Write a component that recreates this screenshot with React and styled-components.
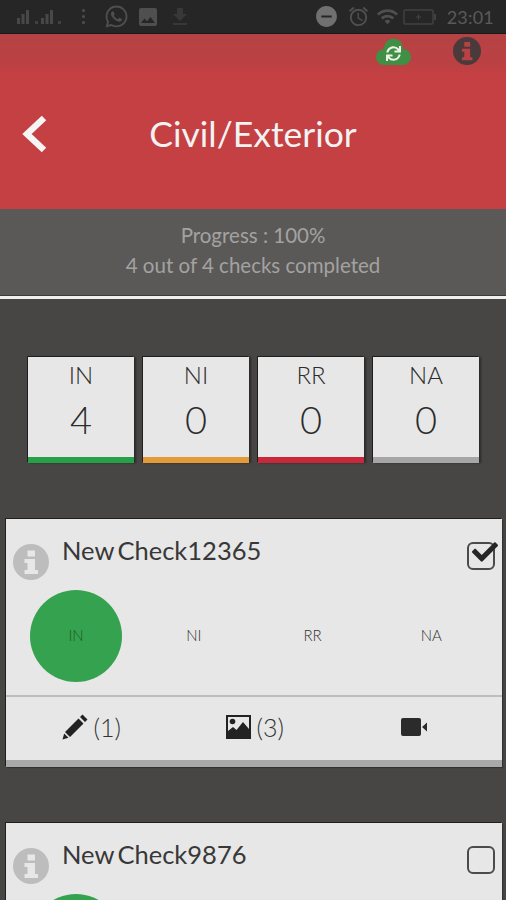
import React from "react";
import styled, { createGlobalStyle } from "styled-components";
import { FaWhatsapp, FaSync, FaCheck } from "react-icons/fa";
import { MdImage, MdFileDownload, MdDoNotDisturbOn, MdAccessAlarm, MdWifi } from "react-icons/md";

const Global = createGlobalStyle`
  html, body { margin: 0; padding: 0; background: #474645; overflow: hidden; }
  * { box-sizing: border-box; }
  body { font-family: Lato, "Open Sans", "Liberation Sans", sans-serif; }
`;

const Screen = styled.div`
  width: 506px; height: 900px; overflow: hidden; background: #474645; opacity: .999;
`;

const StatusBar = styled.div`
  height: 34px; background: #262626; display: flex; align-items: center;
  padding: 0 12px 0 16px; color: #4f4f4f; border-bottom: 1px solid #1a1a1a;
`;
const StatusLeft = styled.div`display: flex; align-items: center; flex: 1;`;
const StatusRight = styled.div`display: flex; align-items: center;`;
const Clock = styled.span`font-size: 18px; color: #5a5a5a; margin-left: 10px; letter-spacing: .2px;`;
const Dots = styled.div`
  display: flex; flex-direction: column; gap: 3px; margin: 0 19px 0 18px;
  & > i { width: 3px; height: 3px; border-radius: 50%; background: #4f4f4f; display: block; }
`;

const Signal = ({ n }) => (
  <svg width="24" height="18" viewBox="0 0 24 18">
    <g fill="#484848">
      <rect x="1" y="10" width="3" height="6" />
      <rect x="5.5" y="6" width="3" height="10" />
      <rect x="10" y="2" width="3" height="14" />
    </g>
    <rect x={n === 1 ? 19 : 18} y="13" width="3" height="3" fill="#404040" />
  </svg>
);

const Battery = () => (
  <svg width="34" height="18" viewBox="0 0 34 18" style={{ marginLeft: 4 }}>
    <rect x="1" y="2" width="29" height="14" rx="1" fill="none" stroke="#424242" strokeWidth="1.4" />
    <rect x="31" y="6" width="2" height="6" fill="#424242" />
    <path d="M13 9h5M15.5 6.5v5" stroke="#424242" strokeWidth="1.2" />
  </svg>
);

const InfoGlyph = ({ size, color }) => (
  <svg width={size} height={size} viewBox="0 0 36 36">
    <path
      fill={color}
      fillRule="evenodd"
      d="M18 0a18 18 0 1 1 0 36a18 18 0 0 1 0-36zM14.5 6.5v6h7.5v-6zM11.5 15v4h3v7h-3v4h13.500v-4h-3v-11z"
    />
  </svg>
);

const CloudGlyph = () => (
  <svg width="35" height="28" viewBox="0 0 35 28" fill="#3f8f44">
    <circle cx="17.500" cy="10" r="9.500" />
    <circle cx="8" cy="19" r="8" />
    <circle cx="27" cy="19" r="8" />
    <rect x="8" y="14" width="19" height="13" />
  </svg>
);

const PencilGlyph = () => (
  <svg width="26" height="26" viewBox="0 0 26 26" fill="#222">
    <path d="M19.500 1.500l1-1 5 5-1 1-1.500 1.500-5-5zM16.500 4.500l5 5L8 23 3 18z" />
    <path d="M2.200 19.500l4.300 4.300L0.500 25.500z" />
  </svg>
);

const PictureGlyph = () => (
  <svg width="25" height="24" viewBox="0 0 25 24">
    <path fill="#222" fillRule="evenodd" d="M0 0h25v24H0zM2 2v20h21V2z" />
    <circle cx="6.500" cy="6.500" r="2.800" fill="#222" />
    <path fill="#222" d="M2 22v-6l5-4 3.500 3L17 7l6 7v8z" />
  </svg>
);

const VideoGlyph = () => (
  <svg width="27" height="20" viewBox="0 0 27 20" fill="#2b2b2b">
    <rect x="0" y="1" width="20" height="18" rx="2" />
    <path d="M21 10l5-4.500v9z" />
  </svg>
);

const BackGlyph = () => (
  <svg width="28" height="40" viewBox="0 0 28 40">
    <path d="M23 4L6 20l17 16" fill="none" stroke="#f5f5f5" strokeWidth="6.500" />
  </svg>
);

const Header = styled.header`
  height: 175px; display: flex; flex-direction: column;
  background: linear-gradient(#b54244 0, #bb4143 30px, #c44043 40px, #c44043 100%);
`;
const ActionRow = styled.div`
  height: 36px; display: flex; justify-content: flex-end; align-items: center;
  padding-right: 25px; gap: 42px;
`;
const SyncBadge = styled.div`
  position: relative; width: 35px; height: 28px;
  & > svg:first-child { position: absolute; inset: 0; }
  & > svg:last-child { position: absolute; left: 10px; top: 8px; color: #eef1e8; }
`;
const InfoSlot = styled.div`display: flex; margin-bottom: 2px;`;
const TitleRow = styled.div`
  flex: 1; position: relative; display: flex; align-items: center; justify-content: center;
  padding-bottom: 12px; color: #f2f2f2; font-size: 35.5px; font-weight: 400;
`;
const Back = styled.div`
  position: absolute; left: 21px; top: 44px; display: flex;
`;

const Progress = styled.section`
  height: 87px; background: #5a5958; color: #a3a2a1; font-size: 20.5px; line-height: 30px;
  text-align: center; padding-top: 11px; border-bottom: 1px solid #3c3b3a;
`;
const Divider = styled.div`height: 3px; background: #f0f0f0;`;

const Tiles = styled.div`
  display: flex; gap: 9px; padding: 58px 0 0 28px;
`;
const Tile = styled.div`
  width: 106px; height: 106px; background: #e7e7e7; color: #2c2c2c; text-align: center;
  border-bottom: 6px solid ${(p) => p.$bar};
  box-shadow: -1px -1px 0 #1f1f1f, 2px 0 2px #2a2a2a;
  display: flex; flex-direction: column; align-items: center; padding-top: 3px;
`;
const TileLabel = styled.div`font-size: 24px; line-height: 30px; font-weight: 300;`;
const TileValue = styled.div`font-size: 38px; line-height: 50px; font-weight: 300; margin-top: 4px;`;

const Card = styled.article`
  margin: 56px 4px 0 6px; background: #e7e7e7; color: #2b2b2b;
  box-shadow: -1px -1px 0 #1f1f1f, 1px 1px 1px #333;
  ${(p) => p.$open ? "border-bottom: 7px solid #a9a9a9;" : ""}
`;
const CardTop = styled.div`
  position: relative; height: 176px; padding: 14px 0 0 56px;
`;
const CheckName = styled.h3`
  margin: 0; font-size: 25.5px; font-weight: 400; line-height: 34px; color: #383838; word-spacing: -3px;
`;
const InfoIcon = styled.div`
  position: absolute; left: 7px; top: 25px; display: flex;
`;
const Box = styled.div`
  position: absolute; right: 7px; top: 23px; width: 28px; height: 28px; border-radius: 6px;
  border: 2px solid #4b4b4b; color: #262626;
  & > svg { position: absolute; left: 3px; top: -5px; }
`;
const Options = styled.div`
  position: absolute; left: 24px; top: 71px; display: grid; grid-template-columns: repeat(4, 118.8px);
`;
const Option = styled.div`
  width: 92px; height: 92px; border-radius: 50%; display: flex; align-items: center; justify-content: center;
  padding: 0 ${(p) => p.$on ? 0 : 2}px 2px 0;
  font-size: 15px; font-weight: 300; color: ${(p) => p.$on ? "#1f5c2a" : "#333"};
  background: ${(p) => p.$on ? "#34a24e" : "transparent"};
`;
const Actions = styled.div`
  height: 65px; border-top: 2px solid #bdbdbd; display: grid; grid-template-columns: 173px 177px 1fr;
  align-items: center; padding: 0 0 4px 0;
`;
const ActionItem = styled.div`
  display: flex; align-items: center; justify-content: flex-end; gap: 6px; font-size: 25px; font-weight: 300; color: #333;
  padding-right: ${(p) => p.$pr}px;
`;

const tiles = [
  ["IN", 4, "#27a148"],
  ["NI", 0, "#e39b3a"],
  ["RR", 0, "#c8283a"],
  ["NA", 0, "#a6a6a6"],
];

export default function App() {
  return (
    <Screen>
      <Global />
      <StatusBar>
        <StatusLeft>
          <Signal n={1} />
          <Signal n={2} />
          <Dots><i /><i /><i /></Dots>
          <FaWhatsapp size={25} />
          <MdImage size={24} style={{ marginLeft: 7 }} />
          <MdFileDownload size={24} color="#383838" style={{ marginLeft: 8 }} />
        </StatusLeft>
        <StatusRight>
          <MdDoNotDisturbOn size={25} color="#707070" />
          <MdAccessAlarm size={23} style={{ marginLeft: 8 }} />
          <MdWifi size={23} style={{ marginLeft: 6 }} />
          <Battery />
          <Clock>23:01</Clock>
        </StatusRight>
      </StatusBar>
      <Header>
        <ActionRow>
          <SyncBadge>
            <CloudGlyph />
            <FaSync size={15} />
          </SyncBadge>
          <InfoSlot><InfoGlyph size={28} color="#4b3a3b" /></InfoSlot>
        </ActionRow>
        <TitleRow>
          Civil/Exterior
          <Back><BackGlyph /></Back>
        </TitleRow>
      </Header>
      <Progress>
        Progress : 100%<br />4 out of 4 checks completed
      </Progress>
      <Divider />
      <Tiles>
        {tiles.map(([l, v, c]) => (
          <Tile key={l} $bar={c}>
            <TileLabel>{l}</TileLabel>
            <TileValue>{v}</TileValue>
          </Tile>
        ))}
      </Tiles>
      <Card $open>
        <CardTop>
          <CheckName>New Check12365</CheckName>
          <InfoIcon><InfoGlyph size={36} color="#bdbdbd" /></InfoIcon>
          <Box><FaCheck size={26} /></Box>
          <Options>
            <Option $on>IN</Option>
            <Option>NI</Option>
            <Option>RR</Option>
            <Option>NA</Option>
          </Options>
        </CardTop>
        <Actions>
          <ActionItem $pr={58}><PencilGlyph />(1)</ActionItem>
          <ActionItem $pr={72}><PictureGlyph />(3)</ActionItem>
          <ActionItem $pr={74}><VideoGlyph /></ActionItem>
        </Actions>
      </Card>
      <Card>
        <CardTop>
          <CheckName>New Check9876</CheckName>
          <InfoIcon><InfoGlyph size={36} color="#bdbdbd" /></InfoIcon>
          <Box />
          <Options><Option $on /></Options>
        </CardTop>
      </Card>
    </Screen>
  );
}
